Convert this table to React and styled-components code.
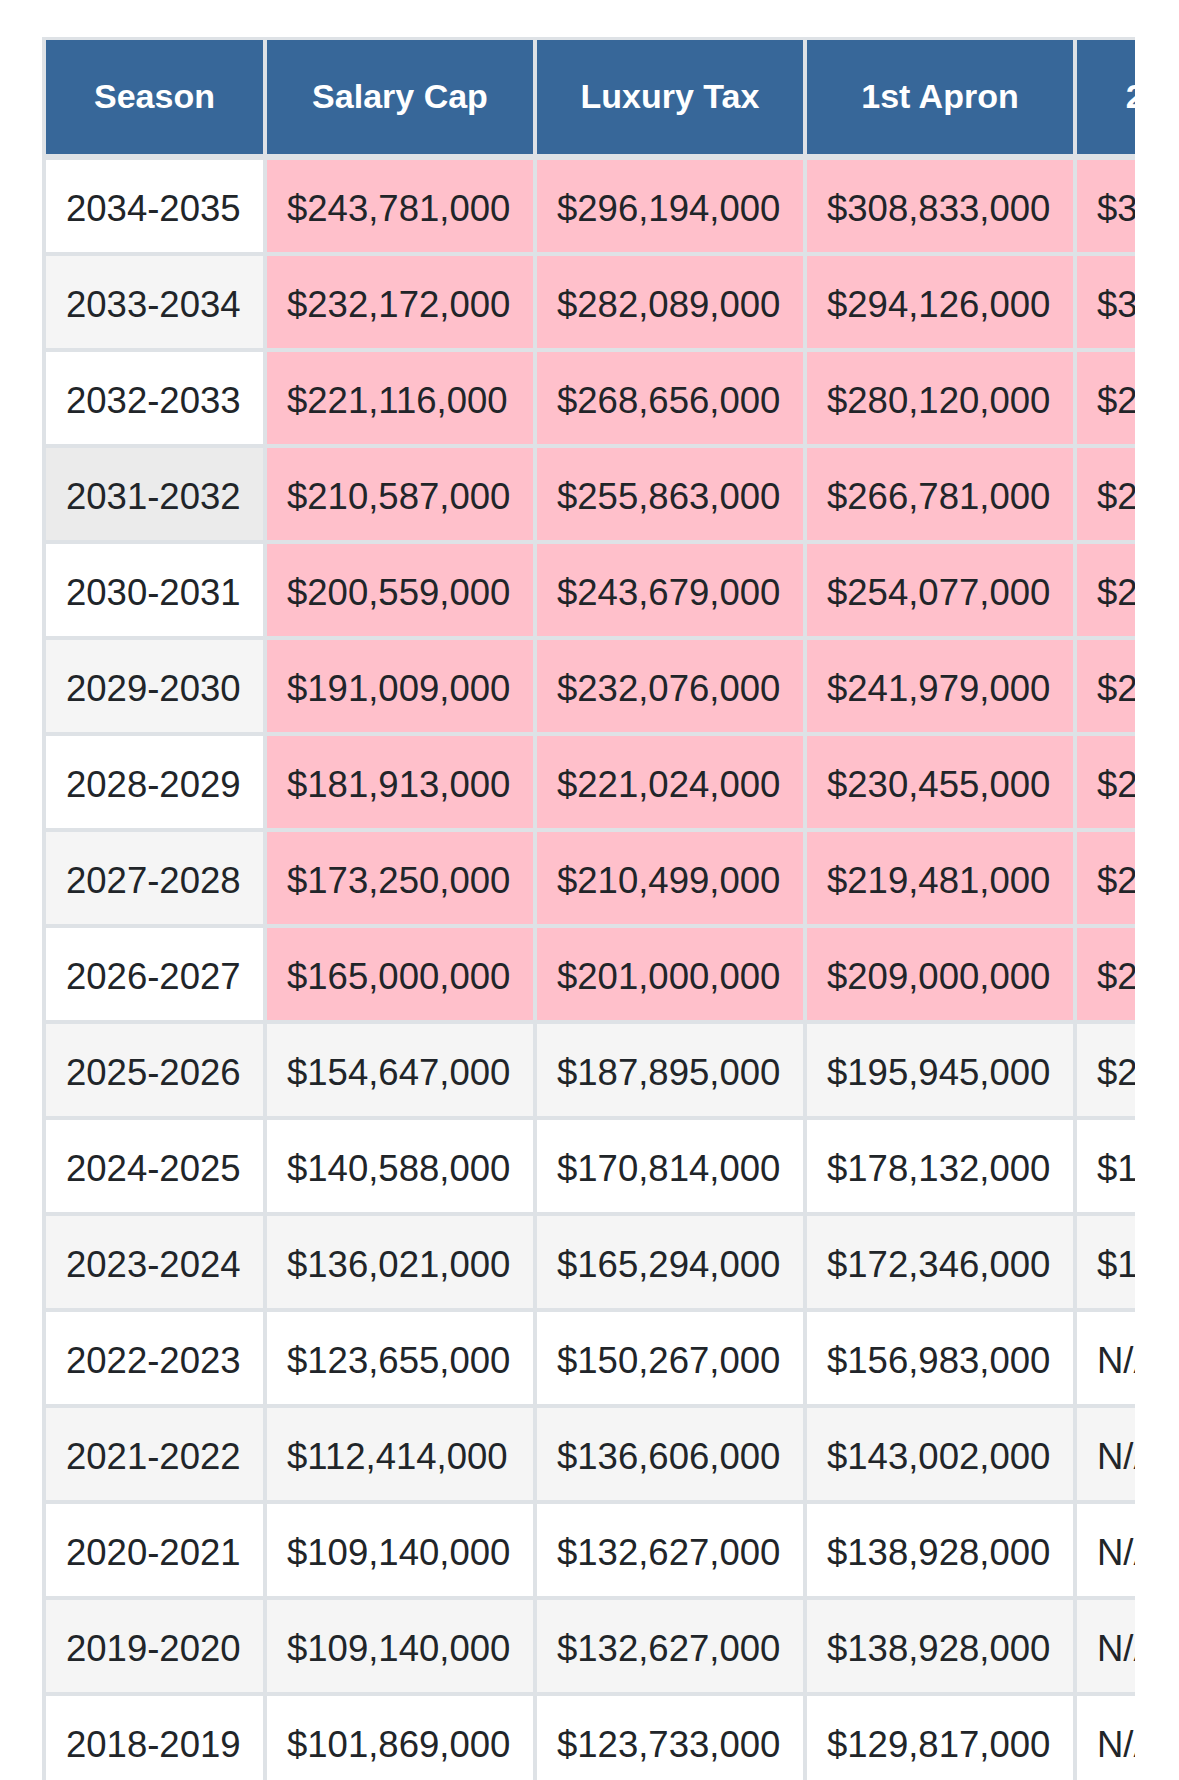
import React from 'react';
import styled, { createGlobalStyle } from 'styled-components';

const GlobalStyle = createGlobalStyle`
  html, body {
    margin: 0;
    padding: 0;
    background: #fff;
  }
  body {
    font-family: "Liberation Sans", Arial, Helvetica, sans-serif;
    color: #212529;
  }
`;

const Scroller = styled.div`
  width: 1093px;
  margin: 37px 0 0 42px;
  overflow-x: auto;
`;

const Table = styled.table`
  width: ${p => p.$w}px;
  border-collapse: separate;
  border-spacing: 0;
  table-layout: fixed;
  border-top: 3px solid #dee2e6;
  border-left: 4px solid #dee2e6;
`;

const HeadCell = styled.th`
  box-sizing: border-box;
  width: ${p => p.$w}px;
  height: 120px;
  padding: 0 0 1px;
  background: #376799;
  color: #fff;
  font-size: 34px;
  font-weight: 700;
  text-align: center;
  vertical-align: middle;
  white-space: nowrap;
  border-right: 4px solid #dee2e6;
  border-bottom: 6px solid #dee2e6;
`;

const bgFor = p => {
  if (p.$hover) return '#ebebeb';
  if (p.$over) return '#ffc0cb';
  return p.$striped ? '#f5f5f5' : '#fff';
};

const Cell = styled.td`
  box-sizing: border-box;
  height: 96px;
  padding: 6px 0 0 20px;
  background: ${bgFor};
  font-size: 36.5px;
  text-align: left;
  vertical-align: middle;
  white-space: nowrap;
  overflow: hidden;
  border-right: 4px solid #dee2e6;
  border-bottom: 4px solid #dee2e6;
`;

const columns = [
  { label: 'Season', width: 221 },
  { label: 'Salary Cap', width: 270 },
  { label: 'Luxury Tax', width: 270 },
  { label: '1st Apron', width: 270 },
  { label: '2nd Apron', width: 270 },
];

const tableWidth = 4 + columns.reduce((sum, c) => sum + c.width, 0);

// season, cap, tax, 1st apron, 2nd apron, projected (over the current cap)
const seasons = [
  ['2034-2035', '$243,781,000', '$296,194,000', '$308,833,000', '$327,540,000', true],
  ['2033-2034', '$232,172,000', '$282,089,000', '$294,126,000', '$311,945,000', true],
  ['2032-2033', '$221,116,000', '$268,656,000', '$280,120,000', '$297,091,000', true],
  ['2031-2032', '$210,587,000', '$255,863,000', '$266,781,000', '$282,944,000', true],
  ['2030-2031', '$200,559,000', '$243,679,000', '$254,077,000', '$269,470,000', true],
  ['2029-2030', '$191,009,000', '$232,076,000', '$241,979,000', '$256,638,000', true],
  ['2028-2029', '$181,913,000', '$221,024,000', '$230,455,000', '$244,417,000', true],
  ['2027-2028', '$173,250,000', '$210,499,000', '$219,481,000', '$232,778,000', true],
  ['2026-2027', '$165,000,000', '$201,000,000', '$209,000,000', '$221,693,000', true],
  ['2025-2026', '$154,647,000', '$187,895,000', '$195,945,000', '$207,824,000', false],
  ['2024-2025', '$140,588,000', '$170,814,000', '$178,132,000', '$188,931,000', false],
  ['2023-2024', '$136,021,000', '$165,294,000', '$172,346,000', '$182,794,000', false],
  ['2022-2023', '$123,655,000', '$150,267,000', '$156,983,000', 'N/A', false],
  ['2021-2022', '$112,414,000', '$136,606,000', '$143,002,000', 'N/A', false],
  ['2020-2021', '$109,140,000', '$132,627,000', '$138,928,000', 'N/A', false],
  ['2019-2020', '$109,140,000', '$132,627,000', '$138,928,000', 'N/A', false],
  ['2018-2019', '$101,869,000', '$123,733,000', '$129,817,000', 'N/A', false],
];

const App = () => {
  return (
    <React.Fragment>
      <GlobalStyle />
      <Scroller>
        <Table $w={tableWidth}>
          <thead>
            <tr>
              {columns.map(c => (
                <HeadCell key={c.label} $w={c.width}>{c.label}</HeadCell>
              ))}
            </tr>
          </thead>
          <tbody>
            {seasons.map((row, i) => {
              const projected = row[5];
              return (
                <tr key={row[0]}>
                  {row.slice(0, 5).map((value, j) => (
                    <Cell
                      key={j}
                      $striped={i % 2 === 1}
                      $over={projected && j > 0}
                      $hover={row[0] === '2031-2032' && j === 0}
                    >
                      {value}
                    </Cell>
                  ))}
                </tr>
              );
            })}
          </tbody>
        </Table>
      </Scroller>
    </React.Fragment>
  );
};

export default App;
